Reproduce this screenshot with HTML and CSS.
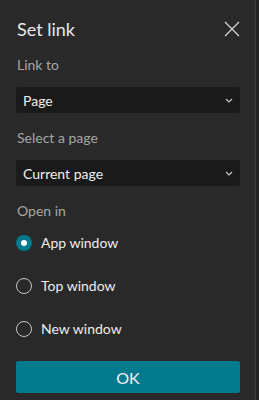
FILE: index.html
```html
<!DOCTYPE html>
<html lang="en">
<head>
  <meta charset="UTF-8">
  <meta name="viewport" content="width=device-width, initial-scale=1.0">
  <title>Set link</title>
  <link rel="stylesheet" href="styles.css">
</head>
<body>
  <div class="panel">
    <div class="panel-header">
      <h2>Set link</h2>
      <button class="close-btn" aria-label="Close">
        <svg width="16" height="16" viewBox="0 0 16 16">
          <path d="M1 1 L15 15 M15 1 L1 15" stroke="#d4d4d4" stroke-width="1.3" fill="none"/>
        </svg>
      </button>
    </div>

    <p class="field-label">Link to</p>
    <div class="select">
      <span>Page</span>
      <svg class="chevron" width="8" height="5" viewBox="0 0 8 5">
        <path d="M1 1 L4 4 L7 1" stroke="#c8c8c8" stroke-width="1.2" fill="none"/>
      </svg>
    </div>

    <p class="field-label">Select a page</p>
    <div class="select">
      <span>Current page</span>
      <svg class="chevron" width="8" height="5" viewBox="0 0 8 5">
        <path d="M1 1 L4 4 L7 1" stroke="#c8c8c8" stroke-width="1.2" fill="none"/>
      </svg>
    </div>

    <p class="field-label">Open in</p>
    <div class="radio-group">
      <label class="radio-row">
        <span class="radio checked"></span>
        App window
      </label>
      <label class="radio-row">
        <span class="radio"></span>
        Top window
      </label>
      <label class="radio-row">
        <span class="radio"></span>
        New window
      </label>
    </div>

    <button class="ok-btn">OK</button>
  </div>
</body>
</html>
```

FILE: styles.css
```css
* {
  margin: 0;
  padding: 0;
  box-sizing: border-box;
}
body {
  font-family: 'Lato', 'Noto Sans', Arial, sans-serif;
  background: #222;
  color: #e6e6e6;
  width: 259px;
  height: 400px;
  overflow: hidden;
}
.panel {
  width: 256px;
  height: 400px;
  background: #292929;
  border-right: 1px solid #3c3c3c;
  padding: 0 15px 0 16px;
}
.panel-header {
  height: 58px;
  display: flex;
  align-items: center;
  justify-content: space-between;
}
.panel-header h2 {
  font-size: 18px;
  font-weight: 400;
  color: #e8e8e8;
  padding-left: 1px;
}
.close-btn {
  background: none;
  border: none;
  width: 16px;
  height: 16px;
  display: flex;
  cursor: pointer;
}
.field-label {
  font-size: 14px;
  line-height: 20px;
  height: 20px;
  color: #a6a6a6;
  margin-top: -3px;
  margin-bottom: 12px;
  padding-left: 1px;
}
.select + .field-label {
  margin-top: 15px;
}
.select {
  height: 26px;
  width: 224px;
  background: #1a1a1a;
  border-radius: 2px;
  display: flex;
  align-items: center;
  justify-content: space-between;
  padding: 0 7px 0 7px;
  font-size: 14px;
  color: #f0f0f0;
}
.chevron {
  display: block;
}
.radio-group {
  margin-top: -12px;
}
.radio-row {
  height: 43px;
  display: flex;
  align-items: center;
  gap: 9px;
  font-size: 14px;
  color: #ececec;
}
.radio {
  width: 16px;
  height: 16px;
  border-radius: 50%;
  border: 1.5px solid #c4c4c4;
  display: flex;
  align-items: center;
  justify-content: center;
}
.radio.checked {
  border: none;
  background: #007a8c;
}
.radio.checked::after {
  content: "";
  width: 6px;
  height: 6px;
  border-radius: 50%;
  background: #fff;
}
.ok-btn {
  margin-top: 11px;
  width: 224px;
  height: 32px;
  background: #007a8c;
  border: none;
  border-radius: 2px;
  color: #f4f4f4;
  font-family: inherit;
  font-size: 16px;
  cursor: pointer;
}
```
